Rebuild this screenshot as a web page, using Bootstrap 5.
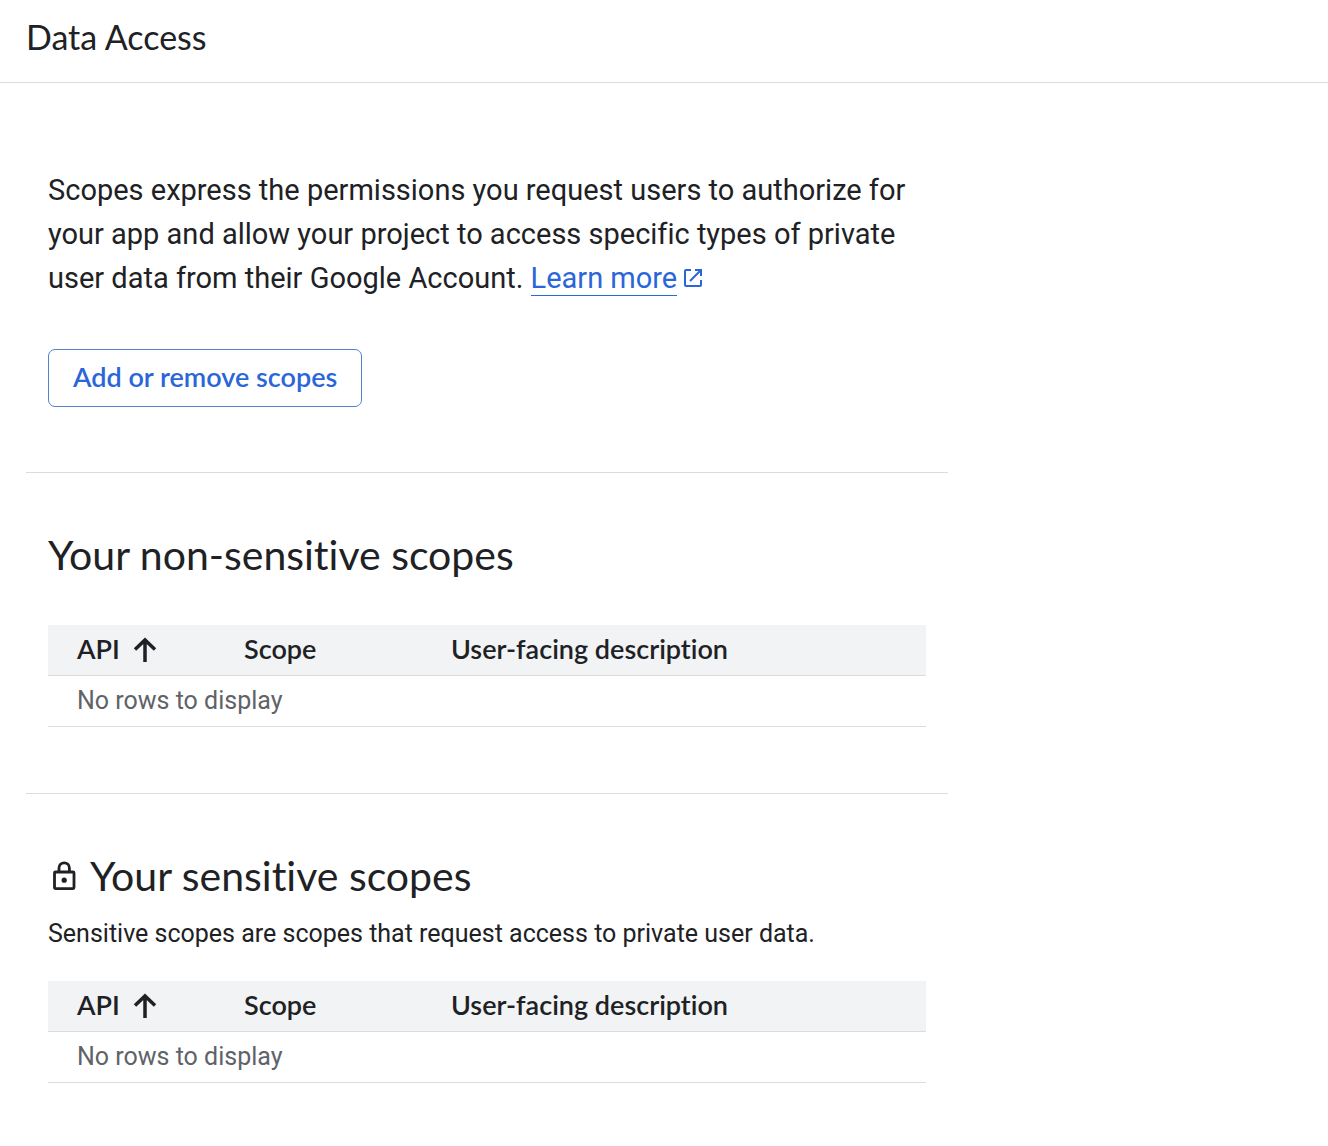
<!DOCTYPE html>
<html lang="en">
<head>
<meta charset="utf-8">
<meta name="viewport" content="width=device-width, initial-scale=1">
<title>Data Access</title>
<link href="https://cdn.jsdelivr.net/npm/bootstrap@5.3.0/dist/css/bootstrap.min.css" rel="stylesheet">
<style>
  :root {
    --ink: #202124;
    --ink-muted: #5f6368;
    --accent: #2b66d9;
    --rule: #dadce0;
    --display: "Google Sans", Lato, "Open Sans", sans-serif;
  }
  body { font-family: Roboto, sans-serif; color: var(--ink); background: #fff; font-variant-ligatures: none; }
  .page-header { padding: 17px 26px 25px; border-bottom: 1px solid var(--rule); }
  .page-title { font: 400 34px/40px var(--display); }
  .page-body { max-width: 974px; padding: 0 26px; }
  .scope-section { padding: 56px 22px 66px; border-bottom: 1px solid var(--rule); }
  .scope-section.intro { padding-top: 85px; padding-bottom: 65px; }
  .scope-section:last-child { border-bottom: 0; }
  .intro-text { font-size: 29px; line-height: 44px; margin-bottom: 49px; }
  .learn-link { color: var(--accent); text-decoration: none; border-bottom: 1px solid var(--accent); }
  .learn-icon { margin-left: 6px; vertical-align: 0; }
  .scopes-btn { font: 600 27px/32px var(--display); color: var(--accent); border: 1px solid #5380d0; border-radius: 7px; padding: 11px 24px 13px; }
  .scopes-btn:hover { color: var(--accent); background: #f3f7fe; border-color: #5380d0; }
  .section-title { font: 400 41px/52px var(--display); font-variant-ligatures: none; }
  .section-title svg { margin: 0 14px 0 4px; }
  .section-note { font-size: 25px; line-height: 32px; }
  .scope-table { table-layout: fixed; margin: 44px 0 0; color: var(--ink); font-size: 25px; line-height: 32px; border-color: var(--rule); }
  .section-note + .scope-table { margin-top: 31px; }
  .scope-table > :not(caption) > * > * { padding: 9px 29px; border-bottom: 1px solid var(--rule); }
  .scope-table > thead > tr > th { padding: 8px 29px 10px; font-family: var(--display); font-size: 27px; font-weight: 600; background: #f1f3f4; white-space: nowrap; }
  .scope-table td.empty-row { color: var(--ink-muted); }
  .sort-label { gap: 13px; }
  .col-api { width: 167px; }
  .col-scope { width: 207px; }
</style>
</head>
<body>
<header class="page-header">
  <h1 class="page-title mb-0">Data Access</h1>
</header>
<main class="page-body">
  <section class="scope-section intro">
    <p class="intro-text">Scopes express the permissions you request users to authorize for your app and allow your project to access specific types of private user data from their Google Account. <a class="learn-link" href="#">Learn more</a><svg class="learn-icon" width="20" height="20" viewBox="0 0 20 20" fill="none" stroke="#2b66d9" stroke-width="2" aria-hidden="true"><path d="M8 2H3Q2 2 2 3V17Q2 18 3 18H17Q18 18 18 17V12M12 2H18V8M18 2L7 13"/></svg></p>
    <button type="button" class="btn scopes-btn">Add or remove scopes</button>
  </section>
  <section class="scope-section">
    <h2 class="section-title mb-0">Your non-sensitive scopes</h2>
    <table class="table scope-table">
      <thead><tr>
        <th class="col-api" scope="col"><span class="sort-label d-flex align-items-center">API <svg width="24" height="26" viewBox="0 0 24 26" fill="none" stroke="#202124" stroke-width="4" aria-hidden="true"><path d="M12 26V4M2 13.5L12 4L22 13.5" stroke-width="3.5"/></svg></span></th>
        <th class="col-scope" scope="col">Scope</th>
        <th scope="col">User-facing description</th>
      </tr></thead>
      <tbody><tr><td class="empty-row" colspan="3">No rows to display</td></tr></tbody>
    </table>
  </section>
  <section class="scope-section">
    <h2 class="section-title d-flex align-items-center mb-0"><svg width="24" height="30" viewBox="0 0 24 30" fill="none" stroke="#202124" stroke-width="2.8" aria-hidden="true"><rect x="2.5" y="11" width="19.5" height="16.6" rx="1"/><path d="M7 11V7A5.2 5.2 0 0 1 17.4 7V11"/><circle cx="12.2" cy="19.2" r="2.6" fill="#202124" stroke="none"/></svg>Your sensitive scopes</h2>
    <p class="section-note mt-3 mb-0">Sensitive scopes are scopes that request access to private user data.</p>
    <table class="table scope-table">
      <thead><tr>
        <th class="col-api" scope="col"><span class="sort-label d-flex align-items-center">API <svg width="24" height="26" viewBox="0 0 24 26" fill="none" stroke="#202124" stroke-width="4" aria-hidden="true"><path d="M12 26V4M2 13.5L12 4L22 13.5" stroke-width="3.5"/></svg></span></th>
        <th class="col-scope" scope="col">Scope</th>
        <th scope="col">User-facing description</th>
      </tr></thead>
      <tbody><tr><td class="empty-row" colspan="3">No rows to display</td></tr></tbody>
    </table>
  </section>
</main>
<script src="https://cdn.jsdelivr.net/npm/bootstrap@5.3.0/dist/js/bootstrap.bundle.min.js"></script>
</body>
</html>
